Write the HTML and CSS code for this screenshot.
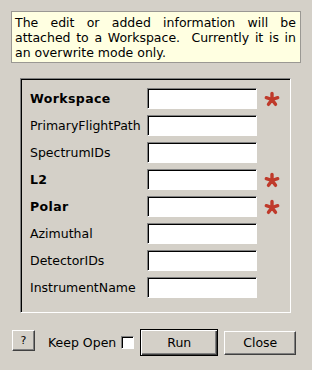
FILE: index.html
```html
<!DOCTYPE html>
<html lang="en">
<head>
  <meta charset="UTF-8" />
  <title>Input Dialog</title>
  <link rel="stylesheet" href="styles.css">
</head>
<body>
  <div class="dialog">
    <p class="info">The edit or added information will be attached to a Workspace. &nbsp;Currently it is in an overwrite mode only.</p>

    <div class="group">
      <label class="field-label required">Workspace</label>
      <input type="text" class="field">
      <svg class="star" viewBox="0 0 16 16"><path d="M8 8.5L8 2.5M8 8.5L13.7 6.65M8 8.5L11.5 13.35M8 8.5L4.5 13.35M8 8.5L2.3 6.65"/></svg>

      <label class="field-label">PrimaryFlightPath</label>
      <input type="text" class="field">
      <span></span>

      <label class="field-label">SpectrumIDs</label>
      <input type="text" class="field">
      <span></span>

      <label class="field-label required">L2</label>
      <input type="text" class="field">
      <svg class="star" viewBox="0 0 16 16"><path d="M8 8.5L8 2.5M8 8.5L13.7 6.65M8 8.5L11.5 13.35M8 8.5L4.5 13.35M8 8.5L2.3 6.65"/></svg>

      <label class="field-label required">Polar</label>
      <input type="text" class="field">
      <svg class="star" viewBox="0 0 16 16"><path d="M8 8.5L8 2.5M8 8.5L13.7 6.65M8 8.5L11.5 13.35M8 8.5L4.5 13.35M8 8.5L2.3 6.65"/></svg>

      <label class="field-label">Azimuthal</label>
      <input type="text" class="field">
      <span></span>

      <label class="field-label">DetectorIDs</label>
      <input type="text" class="field">
      <span></span>

      <label class="field-label">InstrumentName</label>
      <input type="text" class="field">
      <span></span>
    </div>

    <div class="buttons">
      <button class="btn help-btn">?</button>
      <span class="keep-open">Keep Open</span>
      <span class="checkbox"></span>
      <button class="btn run-btn">Run</button>
      <button class="btn close-btn">Close</button>
    </div>
  </div>
</body>
</html>
```

FILE: styles.css
```css
* { box-sizing: border-box; margin: 0; padding: 0; }

body {
  font-family: "DejaVu Sans", "Liberation Sans", sans-serif;
  font-size: 12.5px;
  background-color: #d4d0c8;
  color: #000;
  width: 312px;
  height: 370px;
  overflow: hidden;
}

.dialog {
  padding-top: 11px;
}

.info {
  margin: 0 11px;
  padding: 3px 4px 2px 3px;
  background-color: #ffffe1;
  border: 1px solid #9a9893;
  line-height: 15px;
  text-align: justify;
}

/* Property group */
.group {
  margin: 15px 21px 0 20px;
  padding: 9px 0 14px 9px;
  border: 1px solid;
  border-color: #808080 #fff #fff #808080;
  box-shadow: inset 1px 1px 0 #000;
  display: grid;
  grid-template-columns: 110px 110px 16px;
  grid-auto-rows: 21px;
  column-gap: 7px;
  row-gap: 6px;
  align-items: center;
}

.field-label {
  white-space: nowrap;
}

.field-label.required {
  font-weight: bold;
  letter-spacing: 0.4px;
}

.field {
  width: 110px;
  height: 21px;
  background: #fff;
  border: 1px solid;
  border-color: #808080 #fff #fff #808080;
  box-shadow: inset 1px 1px 0 #000;
  outline: none;
}

.star {
  width: 16px;
  height: 16px;
  fill: none;
  stroke: #bf3a2b;
  stroke-width: 3.4;
  stroke-linecap: round;
}

/* Bottom row */
.buttons {
  display: flex;
  align-items: center;
  margin-top: 16px;
  padding-left: 12px;
  height: 27px;
}

.btn {
  font-family: inherit;
  font-size: 12.5px;
  color: #000;
  background: #d4d0c8;
  border: 1px solid;
  border-color: #fff #404040 #404040 #fff;
  box-shadow: inset -1px -1px 0 #808080;
}

.help-btn {
  width: 23px;
  height: 21px;
  font-size: 11px;
  align-self: flex-start;
  margin-top: 1px;
}

.keep-open {
  margin-left: 13px;
}

.checkbox {
  width: 13px;
  height: 13px;
  margin-left: 5px;
  background: #fff;
  border: 1px solid;
  border-color: #808080 #fff #fff #808080;
  box-shadow: inset 1px 1px 0 #000;
}

.run-btn {
  width: 78px;
  height: 27px;
  margin-left: 6px;
  border: 1px solid #000;
  box-shadow: inset 1px 1px 0 #fff, inset -1px -1px 0 #404040, inset -2px -2px 0 #808080;
}

.close-btn {
  width: 72px;
  height: 24px;
  margin-left: 6px;
}
```
